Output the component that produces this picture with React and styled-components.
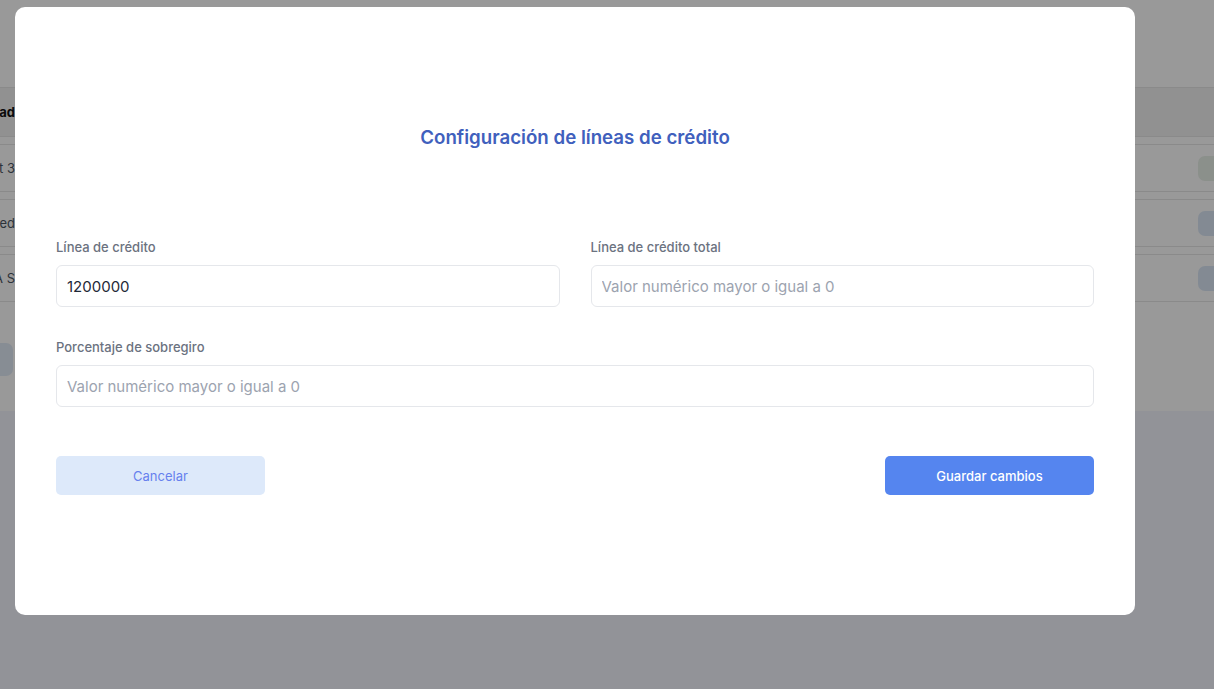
import React from 'react'
import styled, { createGlobalStyle } from 'styled-components'

const GlobalStyle = createGlobalStyle`
  * { box-sizing: border-box; }
  html, body { margin: 0; padding: 0; }
  body {
    background: #f3f5fd;
    font-family: Inter, "Noto Sans", "Liberation Sans", sans-serif;
    overflow: hidden;
  }
`

const rows = [
    { name: 'Cliente Test 3', tone: 'green' },
    { name: 'Limited', tone: 'blue' },
    { name: 'EMPRESA S', tone: 'blue' },
]

function App() {
    return (
        <>
            <GlobalStyle />
            <Page>
                <Panel>
                    <Table>
                        <HeadRow>
                            <NameCell bold>Modalidad</NameCell>
                            <Spacer />
                            <ActionCell />
                        </HeadRow>
                        {rows.map(r => (
                            <Row key={r.name}>
                                <NameCell>{r.name}</NameCell>
                                <Spacer />
                                <ActionCell>
                                    <Chip tone={r.tone} />
                                </ActionCell>
                            </Row>
                        ))}
                    </Table>
                    <PagerButton />
                </Panel>
            </Page>

            <Overlay>
                <Modal>
                    <Title>Configuración de líneas de crédito</Title>
                    <Form>
                        <Field>
                            <Label>Línea de crédito</Label>
                            <Input defaultValue="1200000" />
                        </Field>
                        <Field>
                            <Label>Línea de crédito total</Label>
                            <Input placeholder="Valor numérico mayor o igual a 0" />
                        </Field>
                        <Field wide>
                            <Label>Porcentaje de sobregiro</Label>
                            <Input placeholder="Valor numérico mayor o igual a 0" />
                        </Field>
                    </Form>
                    <Actions>
                        <Button variant="light">Cancelar</Button>
                        <Button variant="primary">Guardar cambios</Button>
                    </Actions>
                </Modal>
            </Overlay>
        </>
    )
}

export default App

const Page = styled.div`
    width: 1214px;
    height: 689px;
`

const Panel = styled.div`
    background: #fff;
    height: 411px;
    padding-top: 87px;
`

const Table = styled.div`
    display: flex;
    flex-direction: column;
    gap: 7px;
`

const Row = styled.div`
    display: flex;
    align-items: center;
    height: 48px;
    border-top: 1px solid #e6e6e6;
    border-bottom: 1px solid #e6e6e6;
    font-size: 13px;
    color: #4b5563;
`

const HeadRow = styled(Row)`
    height: 50px;
    background: #f2f2f2;
    color: #111;
`

const NameCell = styled.div`
    width: 15px;
    overflow: hidden;
    white-space: nowrap;
    display: flex;
    justify-content: flex-end;
    font-weight: ${p => (p.bold ? 700 : 400)};
`

const Spacer = styled.div`
    flex: 1;
`

const ActionCell = styled.div`
    width: 16px;
    display: flex;
    justify-content: flex-start;
`

const Chip = styled.div`
    width: 40px;
    height: 25px;
    flex-shrink: 0;
    border-radius: 7px;
    background: ${p => (p.tone === 'green' ? '#e8f0e8' : '#dbe7f6')};
`

const PagerButton = styled.div`
    margin-top: 41px;
    margin-left: -30px;
    width: 43px;
    height: 33px;
    border-radius: 7px;
    background: #e2ebf7;
`

const Overlay = styled.div`
    position: fixed;
    inset: 0;
    background: rgba(0, 0, 0, 0.4);
    padding: 7px 0 0 15px;
`

const Modal = styled.div`
    width: 1120px;
    height: 608px;
    background: #fff;
    border-radius: 10px;
    padding: 119px 41px 0 41px;
    display: flex;
    flex-direction: column;
`

const Title = styled.h2`
    margin: 0;
    text-align: center;
    font-size: 18.7px;
    line-height: 24px;
    font-weight: 600;
    color: #4060bd;
`

const Form = styled.div`
    margin-top: 88px;
    display: grid;
    grid-template-columns: 1fr 1fr;
    column-gap: 31px;
    row-gap: 31px;
`

const Field = styled.div`
    display: flex;
    flex-direction: column;
    gap: 9px;
    grid-column: ${p => (p.wide ? '1 / span 2' : 'auto')};
`

const Label = styled.label`
    font-size: 13px;
    line-height: 18px;
    font-weight: 500;
    color: #6b7280;
`

const Input = styled.input`
    height: 42px;
    width: 100%;
    border: 1px solid #e5e7eb;
    border-radius: 6px;
    padding: 0 10px;
    font-family: inherit;
    font-size: 15px;
    color: #1f2937;
    outline: none;
    background: #fff;
    &::placeholder {
        color: #9ca3af;
    }
`

const Actions = styled.div`
    margin-top: 49px;
    display: flex;
    justify-content: space-between;
    align-items: center;
`

const Button = styled.button`
    width: 209px;
    height: 39px;
    border: none;
    border-radius: 5px;
    font-family: inherit;
    font-size: 13px;
    cursor: pointer;
    background: ${p => (p.variant === 'primary' ? '#5585ef' : '#dde9fa')};
    color: ${p => (p.variant === 'primary' ? '#fff' : '#6680ee')};
    font-weight: ${p => (p.variant === 'primary' ? 500 : 400)};
`
